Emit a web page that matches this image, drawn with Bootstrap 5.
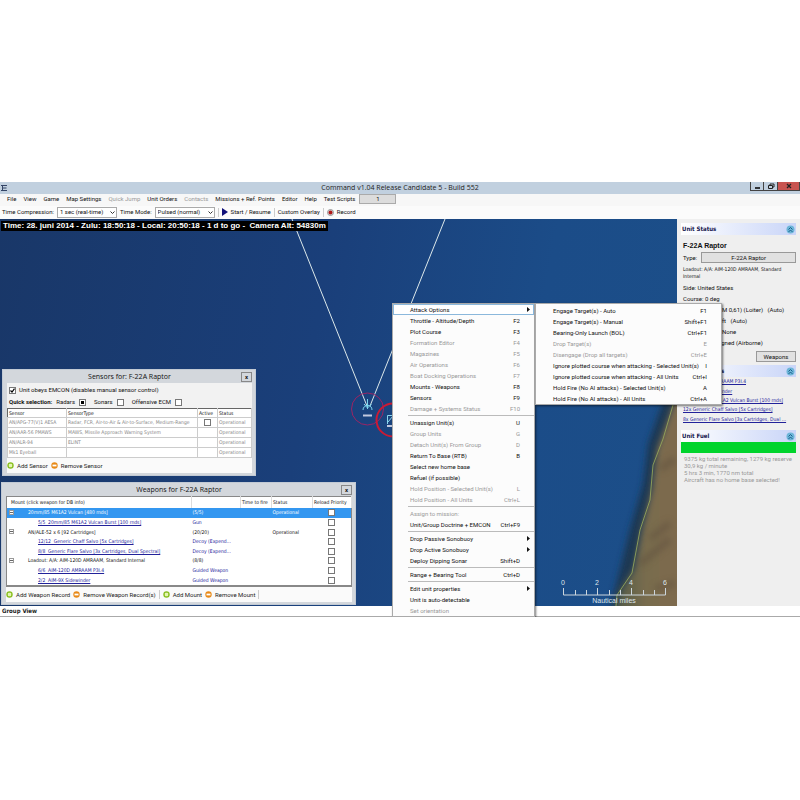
<!DOCTYPE html>
<html lang="en">
<head>
<meta charset="utf-8">
<meta name="viewport" content="width=device-width, initial-scale=1">
<title>Command v1.04 Release Candidate 5 - Build 552</title>
<link href="https://cdn.jsdelivr.net/npm/bootstrap@5.3.0/dist/css/bootstrap.min.css" rel="stylesheet">
<style>
:root{--ui:Roboto,"Liberation Sans",sans-serif;--seg:"Open Sans","Noto Sans",sans-serif;--dense:"DejaVu Sans Condensed","DejaVu Sans",sans-serif}
body{background:#fff;font-family:var(--ui);font-size:6px;line-height:8px;color:#111;padding-top:182px}
button,input,select{font:inherit;color:inherit;border-radius:0}
button{background:none;border:0;padding:0}
.shell{background:#f6f6f6}
.titlebar{background:#c1d0df;height:12px;font:7px/12px var(--seg);color:#222}
.titlebar .caption{padding-left:42px}
.winbtns button{height:9px;width:14px;border:1px solid #444;border-top:0;border-left:0;line-height:0}
.winbtns button:first-child{border-left:1px solid #444}
.winbtns .shut{background:#c85450;width:22px}
.menubar{height:12px;padding:0 0 2px 7px;gap:7px;background:#f7f7f7}
.toolbar{height:13px;padding:0 0 1px 2px;gap:3px;background:#fbfbfb}
.tight{gap:3px}
.off{color:#999}
.scriptbtn{width:37px;height:10px;border:1px solid #aaa;background:#dcdcdc;margin-left:-3px}
.toolbar select{width:60px;height:11px;border:1px solid #aaa;background:#fff;padding:0 2px;appearance:none}
.pick{position:relative;display:inline-block}
.pick svg{position:absolute;right:2px;top:4px;pointer-events:none}
.rule{width:1px;height:9px;background:#ccc}
.stage{min-height:387px}
.map{background:linear-gradient(100deg,#193768 0,#1a3f7a 45%,#1b4c88 75%,#1c4f89 100%);overflow:hidden}
.map>.terrain{position:absolute;left:0;top:0;width:100%;height:100%}
.clock{position:absolute;left:1px;top:2px;background:#000;color:#fff;font:bold 8px/10px "Liberation Sans",sans-serif;padding:0 2px 0 2px;white-space:pre}
.scale{position:absolute;right:8px;bottom:0}
.side{width:123px;background:#efefef;padding:4px 4px 0 4px}
.panelhead{height:12px;background:linear-gradient(90deg,#fff,#c9d5f8);font:bold 6px/12px var(--dense);color:#14144c;padding:0 1px 0 1px;margin:0}
.unitname{font:bold 7px/10px "Liberation Sans",sans-serif;margin:6px 0 1px 2px}
.greybtn{background:#e1e1e1;border:1px solid #999;height:11px}
.greybtn.short{width:40px}
.info{margin:0 0 0 2px;line-height:11px;white-space:nowrap}
.info .k{width:39px}
.loadout{line-height:7px;margin:3px 0 2px 2px;white-space:nowrap;font-family:var(--dense);font-size:5px}
.unitbtns{margin:3px 0 3px}
.arms{margin:0 0 6px 2px;height:47px;align-content:space-evenly;font-family:var(--dense);font-size:5px}
.arms a{line-height:9px}
.arms a,.wpn a{color:#22229a;text-decoration:underline;white-space:nowrap;display:block}
.fuelbar{height:11px;background:#00d42c}
.fueltext{margin:2px 0 0 3px;color:#999;line-height:7px}
.status{height:11px;background:#fff;border-bottom:1px solid #aaa;font:bold 6px/10px var(--dense);padding-left:2px;color:#222}
.dlg{position:absolute;background:#d3d7dc;padding:0 3px 2px 4px;border:1px solid #c2cad4}
.dlg h2{font:7px/13px var(--seg);margin:0;text-align:center}
.dlg .x{position:absolute;right:3px;top:2px;width:11px;height:10px;border:1px solid #888;line-height:6px;font-weight:bold}
.dlg input{appearance:none;width:7px;height:7px;border:1px solid #777;background:#fff;margin:0;flex:none;display:inline-block;vertical-align:middle}
.dlg .ck{background:#fff url("data:image/svg+xml,%3Csvg xmlns='http://www.w3.org/2000/svg' viewBox='0 0 5 5'%3E%3Cpath d='M.5 2.500l1.500 1.500L4.500.7' fill='none' stroke='%23000' stroke-width='1.200'/%3E%3C/svg%3E") center/5px no-repeat}
.dlg .dot{background:linear-gradient(#000,#000) center/3px 3px no-repeat #fff}
.dlg table{width:100%;table-layout:fixed;border-collapse:collapse;background:#fff;white-space:nowrap}
.dlg td,.dlg th{padding:0 1px;font-weight:normal;overflow:hidden}
#sensors{left:2px;bottom:130px;width:254px}
#weapons{left:1px;bottom:1px;width:355px}
.inner{background:#f2f2f2;padding-top:1px}
.emcon{padding:2px 0 0 2px}
.quick{padding:4px 0 2px 2px}
.sens{border:1px solid #666;font-family:var(--dense);font-size:5px}
.sens td{color:#888;height:10px;line-height:9px;border:1px solid #ccc}
.sens th{height:9px;border-right:1px solid #ccc;line-height:8px}
.wpn{height:91px;border:1px solid #888;border-bottom:2px solid #888;font-family:var(--dense);font-size:5px}
.wpn th{line-height:11px;border-right:1px solid #ddd}
.wpn td{line-height:9px}
.wpn .sel{background:#3497f0;color:#fff}
.wpn .kid{padding-left:31px;color:#22229a}
.wpn .knd{color:#22229a}
.wpn .top{padding-left:21px;position:relative}
.tog{position:absolute;left:2px;top:2px;width:5px;height:5px;border:1px solid #999;background:linear-gradient(#666,#666) center/3px 1px no-repeat #fff;padding:0}
.bar{background:#fafafa;height:15px;gap:3px;line-height:15px;color:#222}
.ctx{position:absolute;z-index:5;background:#fcfcfc;border:1px solid #aaa;box-shadow:1px 1px 2px #0008;font:6px/11px Roboto,sans-serif;color:#111}
.ctx button{display:flex;width:100%;height:11px;line-height:9px;justify-content:space-between;padding:0 14px 1px 17px;text-align:left;white-space:nowrap;align-items:center}
.ctx button:disabled{color:#999}
.ctx .more{padding-right:4px}
.ctx hr{margin:1px 0 1px 15px;border-top:1px solid #bbb;opacity:1}
.ctx .hot{outline:1px solid #8bb8dc;outline-offset:-1px;background:#fff}
#menu{left:392px;top:84px;width:143px}
#submenu{left:535px;top:84px;width:187px;padding-top:1px}
</style>
<script src="https://cdn.jsdelivr.net/npm/bootstrap@5.3.0/dist/js/bootstrap.bundle.min.js"></script>
</head>
<body>
<svg width="0" height="0" class="position-absolute" aria-hidden="true">
<symbol id="add" viewBox="0 0 7 7"><circle cx="3.5" cy="3.5" r="3.2" fill="#86bd1c"/><rect x="1.800" y="1.800" width="3.400" height="3.400" rx="1" fill="#e4f5b0"/></symbol>
<symbol id="del" viewBox="0 0 7 7"><circle cx="3.5" cy="3.5" r="3.2" fill="#e88a18"/><path d="M1.500 3.500h4" stroke="#fff" stroke-width="1.800"/></symbol>
<symbol id="fold" viewBox="0 0 9 9"><circle cx="4.5" cy="4.500" r="4" fill="#6db5d8"/><path d="M2.500 4.500l2-2 2 2M2.500 7l2-2 2 2" fill="none" stroke="#17608c" stroke-width="1"/></symbol>
<symbol id="down" viewBox="0 0 5 3"><path d="M.5.5l2 2 2-2" fill="none" stroke="#333"/></symbol>
<symbol id="more" viewBox="0 0 3 5"><path d="M0 0l3 2.500-3 2.500z" fill="#111"/></symbol>
</svg>
<div class="shell">
<header class="titlebar d-flex align-items-start">
<svg width="8" height="8" viewBox="0 0 8 8" class="align-self-center"><path d="M1 1.500h6M2 4h4.500M1 6.500h6M2.500 1.500v5" stroke="#346" fill="none"/></svg>
<span class="caption flex-grow-1 text-center">Command v1.04 Release Candidate 5 - Build 552</span>
<span class="winbtns d-flex"><button aria-label="Minimize"><svg width="8" height="6"><path d="M2 5h5" stroke="#000" stroke-width="1.500"/></svg></button><button aria-label="Restore"><svg width="8" height="7"><path d="M3 2V1h4v3H6M1.500 2.500h4v3h-4z" fill="none" stroke="#222"/></svg></button><button class="shut" aria-label="Close"><svg width="6" height="6"><path d="M1 1l4 4M5 1L1 5" stroke="#222" stroke-width="1.300"/></svg></button></span>
</header>
<nav class="menubar d-flex align-items-center">
<button>File</button><button>View</button><button>Game</button><button>Map Settings</button><button class="off">Quick Jump</button><button>Unit Orders</button><button class="off">Contacts</button><button>Missions + Ref. Points</button><button>Editor</button><button>Help</button><button>Test Scripts</button><button class="scriptbtn">1</button>
</nav>
<div class="toolbar d-flex align-items-center">
<label for="tc">Time Compression:</label><span class="pick"><select id="tc"><option>1 sec (real-time)</option></select><svg width="5" height="3"><use href="#down"/></svg></span>
<label for="tm">Time Mode:</label><span class="pick"><select id="tm"><option>Pulsed (normal)</option></select><svg width="5" height="3"><use href="#down"/></svg></span>
<span class="rule"></span><button class="d-flex align-items-center tight"><svg width="6" height="8"><path d="M0 0l6 4-6 4z" fill="#10107a"/></svg>Start / Resume</button>
<span class="rule"></span><button>Custom Overlay</button><span class="rule"></span><button class="d-flex align-items-center tight"><svg width="7" height="7"><circle cx="3.500" cy="3.500" r="3" fill="#ddd" stroke="#999"/><circle cx="3.500" cy="3.500" r="2" fill="#b01818"/></svg>Record</button>
</div>
<main class="stage d-flex position-relative">
<section class="map flex-grow-1 position-relative">
<svg class="terrain" viewBox="0 0 677 387" preserveAspectRatio="xMinYMin slice">
<defs><linearGradient id="ld" x1="0" x2="1"><stop offset="0" stop-color="#4f5a48"/><stop offset=".4" stop-color="#786c4e"/><stop offset="1" stop-color="#806b4c"/></linearGradient><filter id="soft"><feGaussianBlur stdDeviation="3"/></filter></defs>
<path d="M677 165L662 185 648 225 643 265 630 310 620 350 610 390H690V165z" fill="#1a3852" filter="url(#soft)"/>
<path d="M677 175L668 200 657 230 652 270 642 310 634 350 620 372 614 395H690V175z" fill="url(#ld)" filter="url(#soft)"/>
<path d="M660 250l15-10M650 320l20-16M640 345l30-25M655 370l20-6" stroke="#5f503c" stroke-width="7" opacity=".5" filter="url(#soft)"/>
<path d="M673 186L663 220 653 246 650 281 640 311 632 354 617 376 616 387" fill="none" stroke="#9caf5a" stroke-width=".8"/>
<path d="M292 0L367 187M445 0L370 187" stroke="#dce8ea" fill="none"/>
<circle cx="367.500" cy="190" r="16" fill="none" stroke="#9b2464"/>
<circle cx="393" cy="201" r="16.500" fill="none" stroke="#cb1a34" stroke-width="2"/>
<path d="M367.500 180v10M363 191c0-3 2-4 4.500-5 3 1 4.500 2 4.500 5M364 185l3.500 4 4-4" stroke="#7dd5ee" fill="none"/><path d="M363 196.500h9" stroke="#c2c9df" stroke-width="2"/>
<path d="M387.500 205V196.500h6M388 203l5-6" stroke="#8ad8ee" fill="none"/><path d="M387 207h6" stroke="#c2c9df" stroke-width="2"/>
</svg>
<div class="clock">Time: 28. juni 2014 - Zulu: 18:50:18 - Local: 20:50:18 - 1 d to go -  Camera Alt: 54830m</div>
<svg class="scale" width="110" height="30" fill="#dfe6ec" font-family="Liberation Sans,sans-serif" font-size="7" text-anchor="middle"><path d="M4.500 12v7H106.500V12M38.500 12v7M72.500 12v7M16.500 14v5M27.500 14v5M50.500 14v5M61.500 14v5M84.500 14v5M95.500 14v5" fill="none" stroke="#ccd6dd"/><text x="4" y="9">0</text><text x="38" y="9">2</text><text x="72" y="9">4</text><text x="106" y="9">6</text><text x="55" y="27">Nautical miles</text></svg>
</section>
<aside class="side">
<h3 class="panelhead d-flex justify-content-between align-items-center">Unit Status<svg width="9" height="9"><use href="#fold"/></svg></h3>
<h4 class="unitname">F-22A Raptor</h4>
<div class="info d-flex align-items-center gap-1"><span>Type:</span><button class="greybtn flex-grow-1 lh-1">F-22A Raptor</button></div>
<p class="loadout">Loadout: A/A: AIM-120D AMRAAM, Standard<br>Internal</p>
<p class="info">Side: United States</p>
<p class="info">Course: 0 deg</p>
<p class="info d-flex"><span class="k">Speed:</span><span>M 0,61) (Loiter) &nbsp; (Auto)</span></p>
<p class="info d-flex"><span class="k">Altitude:</span><span>ft &nbsp; (Auto)</span></p>
<p class="info d-flex"><span class="k">Mission:</span><span>None</span></p>
<p class="info">Status: Unassigned (Airborne)</p>
<div class="unitbtns d-flex justify-content-end"><button class="greybtn short lh-1">Weapons</button></div>
<h3 class="panelhead d-flex justify-content-between align-items-center">Unit Weapons<svg width="9" height="9"><use href="#fold"/></svg></h3>
<div class="arms d-grid"><a href="#a1">6x AIM-120D AMRAAM P3I.4</a><a href="#a2">2x AIM-9X Sidewinder</a><a href="#a3">5x 20mm/85 M61A2 Vulcan Burst [100 rnds]</a><a href="#a4">12x Generic Chaff Salvo [5x Cartridges]</a><a href="#a5">8x Generic Flare Salvo [3x Cartridges, Dual ...</a></div>
<h3 class="panelhead d-flex justify-content-between align-items-center">Unit Fuel<svg width="9" height="9"><use href="#fold"/></svg></h3>
<div class="fuelbar"></div>
<p class="fueltext">9375 kg total remaining, 1279 kg reserve<br>30,9 kg / minute<br>5 hrs 3 min, 1770 nm total<br>Aircraft has no home base selected!</p>
</aside>

<section class="dlg" id="sensors"><h2>Sensors for: F-22A Raptor</h2><button class="x" aria-label="Close">x</button>
<div class="inner">
<div class="emcon d-flex align-items-center tight"><input type="checkbox" id="em" checked class="ck"><label for="em">Unit obeys EMCON (disables manual sensor control)</label></div>
<div class="quick d-flex align-items-center gap-1"><b>Quick selection:</b><label for="q1">Radars</label><input type="checkbox" id="q1" class="dot"><label for="q2" class="ms-1">Sonars</label><input type="checkbox" id="q2"><label for="q3" class="ms-1">Offensive ECM</label><input type="checkbox" id="q3"></div>
<table class="sens"><colgroup><col style="width:59px"><col><col style="width:20px"><col style="width:34px"></colgroup>
<thead><tr><th>Sensor</th><th>SensorType</th><th>Active</th><th>Status</th></tr></thead>
<tbody><tr><td>AN/APG-77(V)1 AESA</td><td>Radar, FCR, Air-to-Air &amp; Air-to-Surface, Medium-Range</td><td class="text-center lh-1"><input type="checkbox" aria-label="Active"></td><td>Operational</td></tr>
<tr><td>AN/AAR-56 PMAWS</td><td>MAWS, Missile Approach Warning System</td><td></td><td>Operational</td></tr>
<tr><td>AN/ALR-94</td><td>ELINT</td><td></td><td>Operational</td></tr>
<tr><td>Mk1 Eyeball</td><td></td><td></td><td>Operational</td></tr></tbody></table>
<div class="bar d-flex align-items-center"><svg width="7" height="7"><use href="#add"/></svg><button>Add Sensor</button><svg width="7" height="7"><use href="#del"/></svg><button>Remove Sensor</button></div>
</div></section>

<section class="dlg" id="weapons"><h2>Weapons for F-22A Raptor</h2><button class="x" aria-label="Close">x</button>
<table class="wpn"><colgroup><col><col style="width:49px"><col style="width:31px"><col style="width:41px"><col style="width:39px"></colgroup>
<thead><tr><th class="ps-1">Mount (click weapon for DB info)</th><th></th><th>Time to fire</th><th>Status</th><th>Reload Priority</th></tr></thead>
<tbody>
<tr class="sel"><td class="top"><button class="tog" aria-label="Collapse"></button>20mm/85 M61A2 Vulcan [480 rnds]</td><td>(5/5)</td><td></td><td>Operational</td><td class="text-center lh-1"><input type="checkbox" aria-label="Reload"></td></tr>
<tr><td class="kid"><a href="#w1">5/5 &nbsp;20mm/85 M61A2 Vulcan Burst [100 rnds]</a></td><td class="knd">Gun</td><td></td><td></td><td class="text-center lh-1"><input type="checkbox" aria-label="Reload"></td></tr>
<tr><td class="top"><button class="tog" aria-label="Collapse"></button>AN/ALE-52 x 6 [92 Cartridges]</td><td>(20/20)</td><td></td><td>Operational</td><td class="text-center lh-1"><input type="checkbox" aria-label="Reload"></td></tr>
<tr><td class="kid"><a href="#w2">12/12 &nbsp;Generic Chaff Salvo [5x Cartridges]</a></td><td class="knd">Decoy (Expend...</td><td></td><td></td><td class="text-center lh-1"><input type="checkbox" aria-label="Reload"></td></tr>
<tr><td class="kid"><a href="#w3">8/8 &nbsp;Generic Flare Salvo [3x Cartridges, Dual Spectral]</a></td><td class="knd">Decoy (Expend...</td><td></td><td></td><td class="text-center lh-1"><input type="checkbox" aria-label="Reload"></td></tr>
<tr><td class="top"><button class="tog" aria-label="Collapse"></button>Loadout: A/A: AIM-120D AMRAAM, Standard Internal</td><td>(8/8)</td><td></td><td></td><td class="text-center lh-1"><input type="checkbox" aria-label="Reload"></td></tr>
<tr><td class="kid"><a href="#w4">6/6 &nbsp;AIM-120D AMRAAM P3I.4</a></td><td class="knd">Guided Weapon</td><td></td><td></td><td class="text-center lh-1"><input type="checkbox" aria-label="Reload"></td></tr>
<tr><td class="kid"><a href="#w5">2/2 &nbsp;AIM-9X Sidewinder</a></td><td class="knd">Guided Weapon</td><td></td><td></td><td class="text-center lh-1"><input type="checkbox" aria-label="Reload"></td></tr>
</tbody></table>
<div class="bar d-flex align-items-center"><svg width="7" height="7"><use href="#add"/></svg><button>Add Weapon Record</button><svg width="7" height="7"><use href="#del"/></svg><button>Remove Weapon Record(s)</button><span class="rule"></span><svg width="7" height="7"><use href="#add"/></svg><button>Add Mount</button><svg width="7" height="7"><use href="#del"/></svg><button>Remove Mount</button><span class="rule"></span></div>
</section>

<div class="ctx" id="menu">
<button class="more hot">Attack Options<svg width="3" height="5"><use href="#more"/></svg></button>
<button>Throttle - Altitude/Depth<span>F2</span></button><button>Plot Course<span>F3</span></button>
<button disabled>Formation Editor<span>F4</span></button><button disabled>Magazines<span>F5</span></button><button disabled>Air Operations<span>F6</span></button><button disabled>Boat Docking Operations<span>F7</span></button>
<button>Mounts - Weapons<span>F8</span></button><button>Sensors<span>F9</span></button><button disabled>Damage + Systems Status<span>F10</span></button><hr>
<button>Unassign Unit(s)<span>U</span></button><button disabled>Group Units<span>G</span></button><button disabled>Detach Unit(s) From Group<span>D</span></button><button>Return To Base (RTB)<span>B</span></button><button>Select new home base</button><button>Refuel (if possible)</button><button disabled>Hold Position - Selected Unit(s)<span>L</span></button><button disabled>Hold Position - All Units<span>Ctrl+L</span></button><hr>
<button disabled>Assign to mission:</button><button>Unit/Group Doctrine + EMCON<span>Ctrl+F9</span></button><hr>
<button class="more">Drop Passive Sonobuoy<svg width="3" height="5"><use href="#more"/></svg></button><button class="more">Drop Active Sonobuoy<svg width="3" height="5"><use href="#more"/></svg></button><button>Deploy Dipping Sonar<span>Shift+D</span></button><hr>
<button>Range + Bearing Tool<span>Ctrl+D</span></button><hr>
<button class="more">Edit unit properties<svg width="3" height="5"><use href="#more"/></svg></button><button>Unit is auto-detectable</button><button disabled>Set orientation</button>
</div>
<div class="ctx" id="submenu">
<button>Engage Target(s) - Auto<span>F1</span></button><button>Engage Target(s) - Manual<span>Shift+F1</span></button><button>Bearing-Only Launch (BOL)<span>Ctrl+F1</span></button><button disabled>Drop Target(s)<span>E</span></button><button disabled>Disengage (Drop all targets)<span>Ctrl+E</span></button><button>Ignore plotted course when attacking - Selected Unit(s)<span>I</span></button><button>Ignore plotted course when attacking - All Units<span>Ctrl+I</span></button><button>Hold Fire (No AI attacks) - Selected Unit(s)<span>A</span></button><button>Hold Fire (No AI attacks) - All Units<span>Ctrl+A</span></button>
</div>
</main>
<footer class="status">Group View</footer>
</div>
</body>
</html>
